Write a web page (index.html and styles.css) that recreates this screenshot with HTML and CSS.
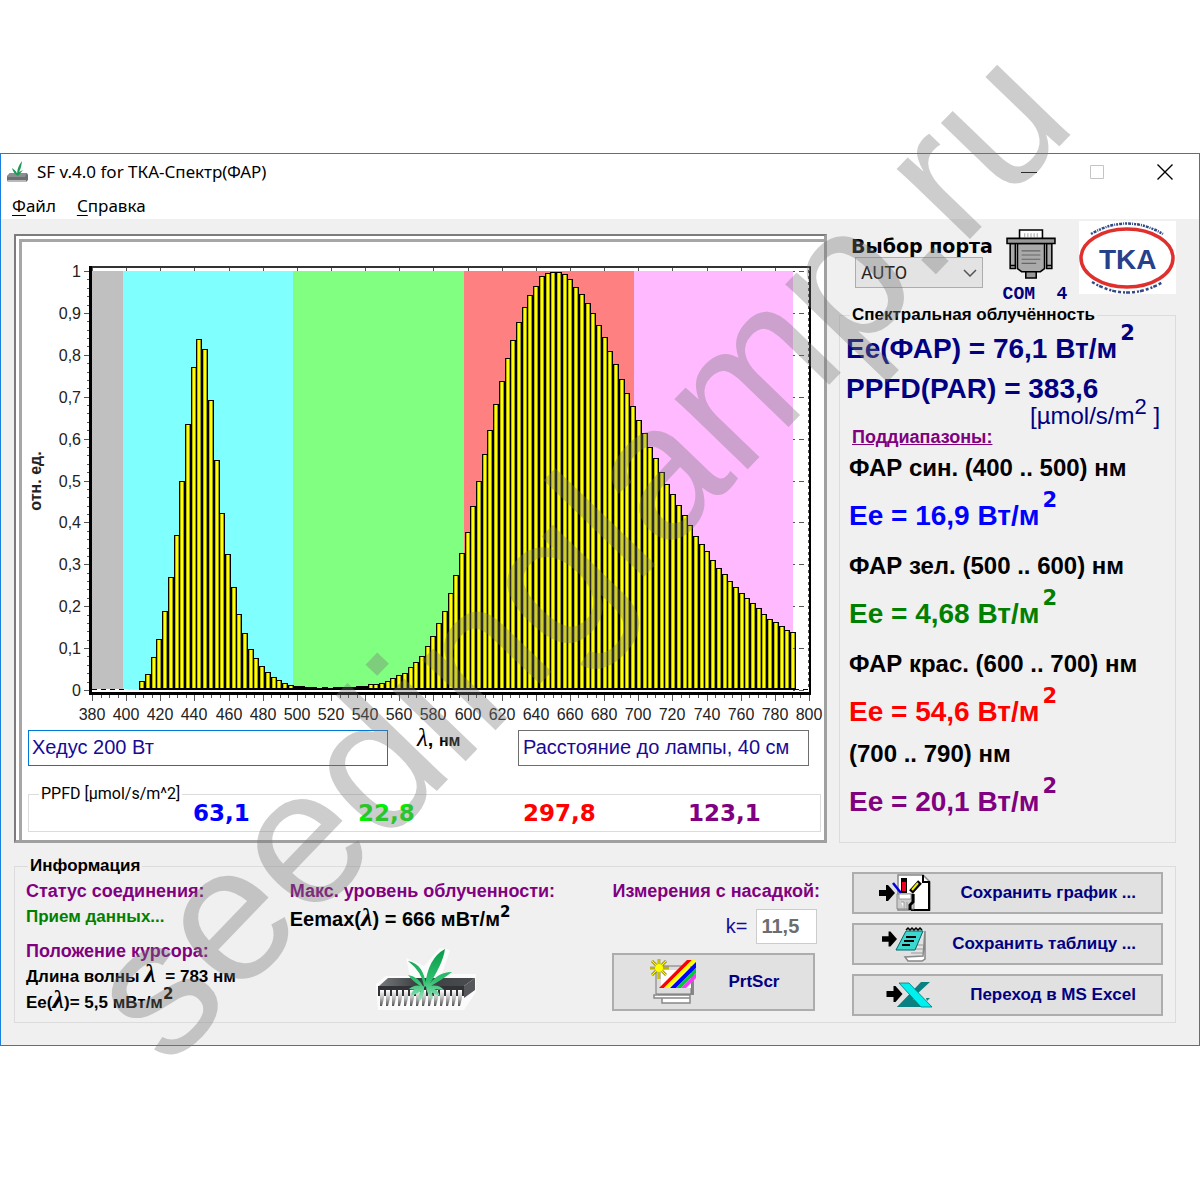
FILE: index.html
```html
<!DOCTYPE html>
<html lang="ru">
<head>
<meta charset="utf-8">
<meta name="viewport" content="width=device-width, initial-scale=1">
<title>SF v.4.0 for ТКА-Спектр(ФАР)</title>
<link rel="stylesheet" href="styles.css">
</head>
<body>
<svg class="defs" aria-hidden="true">
  <defs>
    <linearGradient id="chipTop" x1="0" y1="0" x2="1" y2="0"><stop offset="0" stop-color="#777a7d"/><stop offset=".4" stop-color="#3c3f42"/><stop offset="1" stop-color="#4a4c50"/></linearGradient>
    <linearGradient id="pin" x1="0" y1="0" x2="0" y2="1"><stop offset="0" stop-color="#fff"/><stop offset=".5" stop-color="#bbb"/><stop offset="1" stop-color="#555"/></linearGradient>
    <linearGradient id="leaf" x1="0" y1="0" x2="0" y2="1"><stop offset="0" stop-color="#0a9a48"/><stop offset=".6" stop-color="#2fc070"/><stop offset="1" stop-color="#a8e6c4"/></linearGradient>
    <symbol id="arrow" viewBox="0 0 16 16"><path d="M0 5h7V0h2l7 8-7 8H7v-5H0z" fill="#000"/></symbol>
  </defs>
</svg>
<main class="window">
  <header class="titlebar">
    <svg class="app-icon" viewBox="0 0 22 22" aria-hidden="true">
      <path d="M3 12h17l1 2v5l-2 2H1l-1-2v-4z" fill="#6d6f72"/><path d="M3 12h17l-2 4H0z" fill="#8b8e90"/><path d="M1 19h18v2H1z" fill="#b9b9b9"/>
      <path d="M10 14Q10 6 15 0q-1 8-3 11l4-2-5 6zM11 15Q6 12 5 7q5 3 6 8z" fill="#1e9a58"/>
    </svg>
    <h1 class="title">SF v.4.0 for ТКА-Спектр(ФАР)</h1>
    <div class="controls">
      <button type="button" aria-label="Свернуть"><svg viewBox="0 0 16 16"><path d="M0 8.5h16" stroke="#000"/></svg></button>
      <button type="button" aria-label="Развернуть" disabled><svg viewBox="0 0 16 16"><path d="M1.500 1.500h13v13h-13z" fill="none" stroke="#c4c4c4"/></svg></button>
      <button type="button" aria-label="Закрыть"><svg viewBox="0 0 16 16"><path d="M.5.5l15 15M15.500.5l-15 15" stroke="#000" stroke-width="1.400"/></svg></button>
    </div>
  </header>
  <nav class="menu"><a href="#file"><u>Ф</u>айл</a><a href="#help"><u>С</u>правка</a></nav>

  <div class="workspace">
    <section class="chart-panel">
      <div class="chart-body">
        <svg class="chart" id="chart" viewBox="22 242 802 482" role="img" aria-label="Спектр, отн. ед."></svg>
        <div class="notes">
          <input class="note note-name" type="text" value="Хедус 200 Вт" aria-label="Название">
          <span class="axis-name"><i>λ</i><b>,</b> <small>нм</small></span>
          <input class="note note-distance" type="text" value="Расстояние до лампы, 40 см" aria-label="Примечание">
        </div>
        <fieldset class="group ppfd">
          <legend>PPFD [µmol/s/m^2]</legend>
          <div class="ppfd-values">
            <output class="blue">63,1</output>
            <output class="lime">22,8</output>
            <output class="red">297,8</output>
            <output class="purple">123,1</output>
          </div>
        </fieldset>
      </div>
    </section>

    <aside class="side">
      <div class="port">
        <div class="port-choice">
          <label for="port">Выбор порта</label>
          <div class="select-box">
            <select id="port"><option>AUTO</option></select>
            <svg viewBox="0 0 14 8" aria-hidden="true"><path d="M1 1l6 6 6-6" fill="none" stroke="#555" stroke-width="1.500"/></svg>
          </div>
        </div>
        <div class="port-state">
          <svg viewBox="0 0 48 48" aria-hidden="true" stroke="#000" stroke-width="1.500">
            <path d="M13 1h22v9H13z" fill="#fff"/><path d="M18 4v4M21 4v4M24 4v4M27 4v4M30 4v4" stroke="#aaa" stroke-width="1"/>
            <path d="M4 14h5v24H4zM39 14h5v24h-5z" fill="#aaa"/><path d="M4 35h5M39 35h5" />
            <path d="M11 14h26v24l-4 3H15l-4-3z" fill="#aaa"/><path d="M1 9h46v5H1z" fill="#999"/>
            <path d="M19 41h10v6H19z" fill="#999"/><path d="M15 21h18M15 25h18M15 29h18M15 33h14" stroke="#666" stroke-width="1"/>
          </svg>
          <span>COM&nbsp; 4</span>
        </div>
        <svg class="brand" viewBox="0 0 97 73" role="img" aria-label="TKA">
          <path d="M0 0h97v73H0z" fill="#fff"/>
          <path d="M12 13Q48-8 84 13" fill="none" stroke="#334a86" stroke-width="2.500" stroke-dasharray="2 1 3 1 1 1"/>
          <path d="M13 61Q48 82 84 61" fill="none" stroke="#334a86" stroke-width="2.500" stroke-dasharray="3 2 2 1 4 2"/>
          <ellipse cx="48" cy="37" rx="46" ry="29" fill="#fff" stroke="#df302e" stroke-width="3.500"/>
          <text x="20" y="48" class="brand-text">TKA</text>
        </svg>
      </div>

      <fieldset class="group irradiance">
        <legend>Спектральная облучённость</legend>
        <p class="total">Ее(ФАР) = 76,1 Вт/м<sup>2</sup></p>
        <p class="total">PPFD(PAR) = 383,6</p>
        <p class="unit">[µmol/s/m<sup>2</sup> ]</p>
        <h2>Поддиапазоны:</h2>
        <dl>
          <dt>ФАР син. (400 .. 500) нм</dt><dd class="blue">Ее = 16,9 Вт/м<sup>2</sup></dd>
          <dt>ФАР зел. (500 .. 600) нм</dt><dd class="green">Ее = 4,68 Вт/м<sup>2</sup></dd>
          <dt>ФАР крас. (600 .. 700) нм</dt><dd class="red">Ее = 54,6 Вт/м<sup>2</sup></dd>
          <dt class="tight">(700 .. 790) нм</dt><dd class="purple">Ее = 20,1 Вт/м<sup>2</sup></dd>
        </dl>
      </fieldset>
    </aside>

    <fieldset class="group info">
      <legend>Информация</legend>
      <div class="info-grid">
        <div class="status">
          <h3>Статус соединения:</h3>
          <p class="green">Прием данных...</p>
          <h3>Положение курсора:</h3>
          <p>Длина волны <i class="lambda">λ</i>&nbsp; = 783 нм</p>
          <p>Ее(<i class="lambda">λ</i>)= 5,5 мВт/м<sup>2</sup></p>
        </div>
        <div class="peak">
          <h3>Макс. уровень облученности:</h3>
          <p>Eemax(<i class="lambda">λ</i>) = 666 мВт/м<sup>2</sup></p>
          <svg class="chip" viewBox="0 0 102 64" aria-hidden="true">
            <path d="M0 36L10 28H34L30 10 48 18 64 0 74 2 66 26H100V44L88 62H2z" fill="#fff" opacity=".75"/>
            <path d="M3 38L12 30H99L88 38z" fill="url(#chipTop)"/><path d="M2 38H88V48H2z" fill="#303235"/><path d="M88 38L99 30V42L88 50z" fill="#55575a"/>
            <g id="pins" fill="url(#pin)"></g>
            <g fill="url(#leaf)"><path d="M49 38Q52 10 69 1 67 16 51 40zM48 38Q46 24 32 13 48 16 50 38zM48 40Q42 28 32 27q6 8 16 13zM51 40Q60 24 76 24 66 32 51 40zM49 39q-10-4-16 2 10 2 16-2zM50 39q12-4 18 3-12-1-18-3zM49 38q-14 2-14 10 10-3 14-10zM50 38q12 2 14 10-11-3-14-10zM48 38q-7 8-5 16 6-6 5-16zM50 38q7 5 7 13-7-5-7-13z"/></g>
          </svg>
        </div>
        <div class="probe">
          <h3>Измерения с насадкой:</h3>
          <div class="factor"><label for="factor">k=</label><input id="factor" type="text" value="11,5" disabled></div>
          <button type="button" class="action print">
            <svg viewBox="0 0 48 46" aria-hidden="true">
              <path d="M8 8h36v28H8z" fill="#888"/><path d="M6 7h35v28H6z" fill="#ddd" stroke="#777"/><path d="M11 11h30v18H11z" fill="#fff"/>
              <path d="M4 36h36v3H4zM12 39h28v5H12z" fill="#fff" stroke="#888" stroke-width="1.500"/>
              <path d="M9 29L37 1h5L14 29z" fill="red"/><path d="M14 29L42 1h4v1L19 29z" fill="#ff0"/><path d="M20 29L46 3v6L26 29z" fill="#00f"/><path d="M26 29L46 9v5L31 29z" fill="#0c3"/><path d="M31 29L46 14v5L36 29z" fill="#f3f"/>
              <path d="M9 0v20M0 9h19M2 2l14 14M16 2L2 16" stroke="#776600" stroke-width="2.500"/><path d="M9 0v20M0 9h19M2 2l14 14M16 2L2 16" stroke="#ff0" stroke-width="1.200"/><circle cx="9" cy="9" r="4" fill="#ff0"/>
            </svg>
            <span>PrtScr</span>
          </button>
        </div>
        <div class="exports">
          <button type="button" class="action">
            <svg viewBox="0 0 54 38" aria-hidden="true">
              <path d="M19 1h25l7 7v28H19z" fill="#fff" stroke="#888" stroke-width="1.500"/><path d="M50 9v27H32M44 1v7h7" fill="none" stroke="#000" stroke-width="2"/>
              <path d="M22 4h6v15h-6z" fill="#000"/><path d="M23 8h4v9h-4z" fill="#e02"/><path d="M14 9l8 10" stroke="#00d" stroke-width="2.500"/><path d="M32 18l9-10" stroke="#000" stroke-width="5"/><path d="M33 16l6-7" stroke="#ee0" stroke-width="2"/>
              <path d="M18 20h17v15H18z" fill="#ccc" stroke="#888"/><path d="M20 20h12v5H20zM22 28h3v7M28 28v7" fill="#fff" stroke="#999"/><path d="M34 20v8l-3 3v5" fill="none" stroke="#000" stroke-width="3"/>
              <use href="#arrow" x="0" y="11" width="16" height="16"/>
            </svg>
            <span>Сохранить график ...</span>
          </button>
          <button type="button" class="action">
            <svg viewBox="0 0 54 38" aria-hidden="true">
              <path d="M46 6v28l-3 2H29l-3-4 18-1z" fill="#fff" stroke="#888" stroke-width="1.500"/><path d="M36 20h8M34 24h10M32 28h12" stroke="#999"/>
              <path d="M27 6h17l-8 19H17z" fill="#3cd8d0" stroke="#066"/><path d="M27 12h10M25 16h10M23 20h8" stroke="#000" stroke-width="1.800"/><path d="M27 5l2-2 2 2 2-2 2 2 2-2 2 2 2-2 2 2" fill="none" stroke="#000" stroke-width="1.500"/>
              <use href="#arrow" x="3" y="6" width="15" height="16"/>
            </svg>
            <span>Сохранить таблицу ...</span>
          </button>
          <button type="button" class="action">
            <svg viewBox="0 0 54 38" aria-hidden="true">
              <path d="M42 6h9L38 18 29 31H18z" fill="#0a8080"/><path d="M18 31h34l-10-7-14-1z" fill="#0a8080"/><path d="M47 22l4 0-3 3z" fill="#0a8080"/><path d="M20 7h10l23 24H42z" fill="#00f0f0" stroke="#077" stroke-width=".8"/>
              <use href="#arrow" x="7" y="10" width="17" height="16"/>
            </svg>
            <span>Переход в MS Excel</span>
          </button>
        </div>
      </div>
    </fieldset>
  </div>
</main>
<div class="watermark" aria-hidden="true"><span>seedinglamp.ru</span></div>
<script src="chart.js"></script>
</body>
</html>
```
FILE: styles.css
```css
* { box-sizing: border-box; }
body { margin: 0; padding: 153px 0; background: #fff; color: #000; font-family: "Liberation Sans", Arial, sans-serif; position: relative; overflow-x: hidden; }
h1, h2, h3, p, dl, dd { margin: 0; }
button, input, select { font: inherit; }
.defs { display: block; width: 0; height: 0; }

.blue { color: #0000ff; }
.lime { color: #00f000; }
.green { color: #008000; }
.red { color: #ff0000; }
.purple { color: #800080; }

.window { border: 1px solid #1a80dc; background: #f0f0f0; }

.titlebar { display: flex; align-items: center; height: 36px; padding-left: 6px; background: #fff; }
.app-icon { width: 22px; height: 22px; margin-right: 8px; }
.title { flex: 1; font: 400 17px/24px "Noto Sans", sans-serif; }
.controls { display: flex; }
.controls button { display: grid; place-items: center; width: 68px; height: 36px; padding: 0; border: 0; background: none; }
.controls svg { width: 16px; height: 16px; }
.menu { display: flex; gap: 21px; height: 29px; padding-left: 11px; background: #fff; font: 17px/32px "Noto Sans", sans-serif; }
.menu a { color: #000; text-decoration: none; }
.menu u { text-underline-offset: 3px; }

.workspace { display: grid; grid-template-columns: minmax(0, 813fr) minmax(0, 337fr); column-gap: 12px; padding: 0 23px 22px 13px; }

.chart-panel { margin-top: 15px; padding: 3px 0 0 3px; border: 2px solid #7c7c7c; border-width: 2px 3px 3px 2px; border-right-color: #a0a0a0; border-bottom-color: #a0a0a0; background: #fff; }
.chart-body { border: solid #a6a6a6; border-width: 3px 0 0 3px; padding-bottom: 8px; }
.chart { display: block; width: 100%; height: auto; }
.chart text { font-size: 16px; fill: #222; }
.chart .y-name { font-weight: bold; font-size: 16px; }

.notes { display: flex; align-items: flex-start; padding: 6px 15px 0 6px; }
.note { height: 36px; padding: 0 4px 2px; border: 1px solid #6e6e6e; background: #fff; color: #1a0a96; font-size: 20px; min-width: 0; }
.note-name { flex: 361; border-color: #0078d7; padding-left: 3px; }
.note-distance { flex: 289; }
.axis-name { flex: 0 0 130px; padding-left: 29px; font-size: 20px; line-height: 16px; white-space: nowrap; }
.axis-name i { font: italic 25px/16px "Liberation Serif", serif; }
.axis-name small { font-size: 16px; font-weight: bold; }

.group { min-width: 0; margin: 0; padding: 0; border: 1px solid #dcdcdc; }
.group > legend { padding: 0 2px; line-height: 12px; font-weight: bold; font-size: 17px; }
.ppfd { height: 44px; margin: 22px 3px 0 6px; }
.ppfd > legend { margin-left: 10px; font: 16px/12px "Roboto", sans-serif; }
.ppfd-values { display: grid; grid-template-columns: 165fr 165fr 165fr 132fr; padding-left: 164px; }
.ppfd output { font: bold 23px/26px "DejaVu Sans", sans-serif; }

.port { display: flex; height: 90px; padding-left: 12px; }
.port-choice { width: 152px; padding-top: 16px; }
.port-choice label { display: block; font: bold 19px/22px "DejaVu Sans", sans-serif; white-space: nowrap; }
.select-box { position: relative; width: 128px; margin-left: 4px; }
.select-box select { appearance: none; width: 100%; height: 31px; padding: 0 5px; border: 1px solid #adadad; border-radius: 0; background: #e3e3e3; color: #222; font: 18px/28px "Roboto", sans-serif; }
.select-box svg { position: absolute; right: 6px; top: 12px; width: 14px; height: 8px; }
.port-state { display: flex; flex-direction: column; align-items: center; width: 64px; margin-right: 12px; padding-top: 10px; color: #000080; font: bold 18px/24px "Liberation Mono", monospace; white-space: nowrap; }
.port-state svg { flex: none; width: 50px; height: 50px; margin-right: 8px; }
.port-state span { padding-top: 3px; }
.brand { flex: none; width: 97px; height: 73px; margin: 2px 0 0; }
.brand-text { font: bold 28px "Liberation Sans", sans-serif; fill: #27408b; }

.side { display: flex; flex-direction: column; }
.irradiance { flex: 1; padding: 8px 6px 0; font-weight: bold; white-space: nowrap; }
.irradiance > legend { margin-left: 4px; }
.total { font-size: 28px; line-height: 40px; color: #000080; }
.unit { margin: -3px 0 0 184px; font-weight: normal; font-size: 24px; line-height: 20px; color: #000080; }
sup { line-height: 0; }
.total sup, dd sup { font: bold 21px/0 "DejaVu Sans", sans-serif; vertical-align: 18px; padding-left: 3px; }
.unit sup { font-size: 22px; vertical-align: 10px; }
.irradiance h2 { margin: 0 0 4px 6px; font-size: 18px; line-height: 22px; color: #800080; text-decoration: underline; }
.irradiance dl { padding-left: 3px; }
.irradiance dt { font-size: 24px; line-height: 32px; margin-top: 18px; }
.irradiance dt:first-child { margin-top: 0; }
.irradiance dt.tight { margin-top: 10px; }
.irradiance dd { font-size: 28px; line-height: 32px; margin-top: 16px; }

.info { grid-column: 1 / -1; margin-top: 17px; }
.info > legend { margin-left: 13px; }
.info-grid { display: grid; grid-template-columns: 264fr 323fr 240fr 311fr; padding: 0 12px 6px 11px; font-weight: bold; white-space: nowrap; }
.info-grid > div { min-width: 0; padding-top: 6px; }
.info h3 { font-size: 18px; line-height: 26px; color: #800080; }
.status p { font-size: 17px; line-height: 26px; }
.status h3 + p + h3 { margin-top: 8px; }
.info sup { font: bold 15px/0 "DejaVu Sans", sans-serif; vertical-align: 9px; }
.lambda { font: italic bold 26px/0 "Liberation Serif", serif; }
.peak p { font-size: 20px; line-height: 30px; }
.chip { display: block; width: 102px; height: 64px; margin: 14px 0 0 86px; }
.factor { display: flex; justify-content: flex-end; align-items: center; gap: 9px; width: 205px; margin-top: 5px; color: #1a0a96; font-size: 20px; font-weight: normal; }
.factor input { width: 61px; height: 35px; padding: 0 4px; border: 1px solid #ccc; background: #fff; color: #6d6d6d; font-size: 20px; font-weight: bold; }
.action { display: flex; align-items: center; width: 100%; height: 42px; padding: 0 25px; border: 2px solid #adadad; background: #e1e1e1; color: #000080; font-size: 17px; font-weight: bold; }
.action svg { flex: none; width: 54px; height: 38px; }
.action span { flex: 1; text-align: right; }
.print { width: 203px; height: 58px; margin-top: 9px; padding: 0 34px 0 36px; }
.print svg { width: 48px; height: 46px; }
.info-grid > .exports { display: flex; flex-direction: column; gap: 9px; padding-top: 0; }

.watermark { position: absolute; inset: 0; overflow: hidden; pointer-events: none; }
.watermark span { position: absolute; left: 48%; top: 46%; font-size: 192px; line-height: 1; color: rgb(120 120 120 / .37); transform: translate(-50%, -50%) rotate(-46deg); white-space: nowrap; }
```
FILE: chart.js
```js
// Bar heights in plot units: 419 units = relative level 1.0
const levels = [
  9,16,33,51,79,113,155,209,266,323,351,341,290,230,177,136,103,76,57,41,
  32,24,18,13,10,7,5,4,4,3,3,2,3,2,3,3,3,3,4,4,
  6,6,7,9,12,15,17,23,28,34,44,54,67,79,97,115,137,158,184,209,
  236,260,286,309,332,350,368,383,395,404,414,417,418,418,416,411,403,396,387,377,
  365,353,339,326,311,297,284,270,257,243,232,218,206,196,185,175,165,154,146,139,
  130,122,116,109,103,97,92,87,82,76,71,68,64,60,58
];
const NS = 'http://www.w3.org/2000/svg';
const chart = document.getElementById('chart');

function add(parent, name, attrs, text) {
  const node = document.createElementNS(NS, name);
  for (const key in attrs) node.setAttribute(key, attrs[key]);
  if (text) node.textContent = text;
  parent.appendChild(node);
}
function box(x, y, width, height, fill) {
  add(chart, 'rect', { x, y, width, height, fill });
}
const xOf = nm => Math.round(92 + (nm - 380) * 1.707);
const yOf = level => Math.round(690 - level * 419);

// Wavelength bands
[[92, 123, '#c0c0c0'], [123, 293, '#80ffff'], [293, 464, '#80ff80'], [464, 634, '#ff8080'], [634, 793, '#ffb9ff']]
  .forEach(([from, to, fill]) => box(from, 271, to - from, 418, fill));

// Frame
box(92, 266, 719, 2, '#333');
box(809, 267, 2, 428, '#000');
add(chart, 'path', { d: 'M808.500 270V690', stroke: '#555', 'stroke-dasharray': '3 3' });
add(chart, 'path', { d: 'M92 689.500H809', stroke: '#000', 'stroke-dasharray': '5 4' });

// Bars
box(128, 689, 12, 1, '#ff0');
levels.forEach((h, i) => {
  const x = Math.round(139.3 + i * 5.708);
  box(x, 690 - h, 6, h, '#000');
  if (h > 4) box(x + 1.3, 691 - h, 3.3, h - 3, '#ff0');
});

// Axes and ticks
box(89, 266, 3, 429, '#000');
box(89, 692, 722, 3, '#000');
for (let nm = 380; nm <= 800; nm += 5) {
  const major = nm % 20 === 0;
  box(xOf(nm), 695, 1, major ? 6 : 3, '#555');
  if (major) {
    box(xOf(nm), 268, 1, 3, '#555');
    add(chart, 'text', { x: xOf(nm), y: 720, 'text-anchor': 'middle' }, String(nm));
  }
}
for (let step = 0; step <= 50; step++) {
  const y = yOf(step / 50);
  const major = step % 5 === 0;
  box(major ? 84 : 87, y, major ? 5 : 2, 1, '#555');
  if (major) {
    add(chart, 'path', { d: `M793 ${y + .5}h11`, stroke: '#555', 'stroke-dasharray': '2 4 5 1' });
    add(chart, 'text', { x: 81, y: y + 6, 'text-anchor': 'end' }, String(step / 50).replace('.', ','));
  }
}
add(chart, 'text', { class: 'y-name', 'text-anchor': 'middle', transform: 'translate(41 481) rotate(-90)' }, 'отн. ед.');

// Chip pins
const pins = document.getElementById('pins');
for (let i = 0; i < 14; i++) add(pins, 'path', { d: `M${4 + i * 6} 42h4v8l-2 8h-2z` });
```
